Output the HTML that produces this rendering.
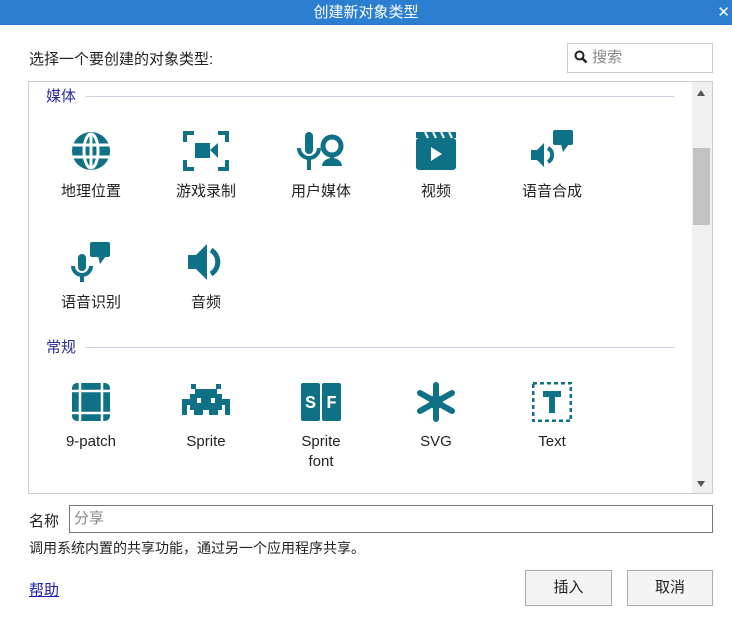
<!DOCTYPE html>
<html><head><meta charset="utf-8"><style>
*{margin:0;padding:0;box-sizing:border-box}
body{width:732px;height:617px;background:#fff;font-family:"Liberation Sans","Noto Sans CJK SC",sans-serif;font-size:15px;color:#222;position:relative;overflow:hidden}
.abs{position:absolute}
.title{left:0;top:0;width:732px;height:25px;background:#2c7fd0;color:#fff;text-align:center;line-height:25px;font-size:15px}
.item{position:absolute;width:100px;text-align:center;font-size:15px;line-height:20px;color:#222}
.item svg{display:block;margin:0 auto 10px}
.sec{position:absolute;left:46px;color:#2a2a9a;font-size:15px;line-height:18px}
.line{position:absolute;height:1px;background:#d0d0e0}
</style></head><body>
<div class="abs title">创建新对象类型<span style="position:absolute;right:2px;top:0">✕</span></div>
<div class="abs" style="left:29px;top:48px">选择一个要创建的对象类型:</div>
<div class="abs" style="left:567px;top:43px;width:146px;height:30px;border:1px solid #ccc;padding-left:6px;line-height:28px;color:#888">
<svg width="14" height="14" viewBox="0 0 14 14" style="vertical-align:-2px"><circle cx="5.5" cy="5.5" r="4" fill="none" stroke="#222" stroke-width="2"/><path d="M8.5 8.5L12.5 12.5" stroke="#222" stroke-width="2.5"/></svg> 搜索</div>
<div class="abs" style="left:28px;top:81px;width:685px;height:413px;border:1px solid #ccc"></div>
<div class="abs" style="left:692px;top:82px;width:20px;height:411px;background:#f0f0f0"></div>
<div class="abs" style="left:693px;top:148px;width:17px;height:77px;background:#c2c2c2"></div>
<div class="abs" style="left:697px;top:90px;width:0;height:0;border-left:4px solid transparent;border-right:4px solid transparent;border-bottom:6px solid #555"></div>
<div class="abs" style="left:697px;top:481px;width:0;height:0;border-left:4px solid transparent;border-right:4px solid transparent;border-top:6px solid #555"></div>
<div class="sec" style="top:88px">媒体</div><div class="line" style="left:86px;top:96px;width:588px"></div>
<div class="sec" style="top:339px">常规</div><div class="line" style="left:86px;top:347px;width:588px"></div>
<div class="item" style="left:41px;top:130px"><svg width="42" height="42" viewBox="0 0 42 42"><circle cx="21" cy="21" r="19" fill="#0e7186"/><g fill="none" stroke="#fff" stroke-width="3"><ellipse cx="21" cy="21" rx="7" ry="17"/><path d="M3 15H39M3 27H39M21 3V39"/></g></svg>地理位置</div>
<div class="item" style="left:156px;top:130px"><svg width="46" height="42" viewBox="0 0 46 42"><g fill="none" stroke="#0e7186" stroke-width="4"><path d="M2 12V3H11M35 3H44V12M44 30V39H35M11 39H2V30"/></g><rect x="12" y="13" width="15" height="15" fill="#0e7186"/><path d="M27 20L35 13V28Z" fill="#0e7186"/></svg>游戏录制</div>
<div class="item" style="left:271px;top:130px"><svg width="50" height="42" viewBox="0 0 50 42"><rect x="9" y="2" width="8" height="22" rx="4" fill="#0e7186"/><path d="M3 18a10 10 0 0 0 20 0M13 28V40" fill="none" stroke="#0e7186" stroke-width="4"/><circle cx="36" cy="16" r="9" fill="none" stroke="#0e7186" stroke-width="5"/><path d="M26 36a10 8 0 0 1 20 0Z" fill="#0e7186"/><rect x="34" y="24" width="4" height="8" fill="#0e7186"/></svg>用户媒体</div>
<div class="item" style="left:386px;top:130px"><svg width="42" height="42" viewBox="0 0 42 42"><rect x="1" y="8" width="40" height="32" rx="3" fill="#0e7186"/><path d="M1 2H41V8H1Z" fill="#0e7186"/><path d="M10 2l3 6M18 2l3 6M26 2l3 6M34 2l3 6" stroke="#fff" stroke-width="2"/><path d="M16 17L27 24L16 31Z" fill="#fff"/></svg>视频</div>
<div class="item" style="left:502px;top:130px"><svg width="46" height="42" viewBox="0 0 46 42"><rect x="24" y="0" width="20" height="15" rx="2" fill="#0e7186"/><path d="M32 14H40L34 22Z" fill="#0e7186"/><path d="M2 20H8L15 13V37L8 30H2Z" fill="#0e7186"/><path d="M19 18a8 8 0 0 1 0 14" fill="none" stroke="#0e7186" stroke-width="4"/></svg>语音合成</div>
<div class="item" style="left:41px;top:241px"><svg width="42" height="42" viewBox="0 0 42 42"><rect x="20" y="1" width="20" height="15" rx="2" fill="#0e7186"/><path d="M28 15H36L30 23Z" fill="#0e7186"/><rect x="8" y="13" width="8" height="17" rx="4" fill="#0e7186"/><path d="M3 25a9 9 0 0 0 18 0M12 34V41" fill="none" stroke="#0e7186" stroke-width="4"/></svg>语音识别</div>
<div class="item" style="left:156px;top:241px"><svg width="42" height="42" viewBox="0 0 42 42"><path d="M3 14H11L22 3V39L11 28H3Z" fill="#0e7186"/><path d="M26 9a14 14 0 0 1 0 24" fill="none" stroke="#0e7186" stroke-width="5"/></svg>音频</div>
<div class="item" style="left:41px;top:382px"><svg width="40" height="40" viewBox="0 0 40 40"><rect x="1" y="1" width="38" height="38" rx="5" fill="#0e7186"/><path d="M9 0V40M31 0V40M0 9H40M0 31H40" stroke="#fff" stroke-width="2.5"/><rect x="11" y="11" width="18" height="18" fill="#0e7186"/></svg>9-patch</div>
<div class="item" style="left:156px;top:382px"><svg width="48" height="40" viewBox="0 -2 48 40"><g fill="#0e7186"><rect x="9" y="0" width="5" height="5"/><rect x="34" y="0" width="5" height="5"/><rect x="13" y="5" width="22" height="6"/><rect x="8" y="10" width="32" height="16"/><rect x="0" y="15" width="48" height="6"/><rect x="0" y="21" width="5" height="10"/><rect x="43" y="21" width="5" height="10"/><rect x="12" y="26" width="9" height="5"/><rect x="27" y="26" width="9" height="5"/></g><rect x="15" y="14" width="4" height="5" fill="#fff"/><rect x="29" y="14" width="4" height="5" fill="#fff"/></svg>Sprite</div>
<div class="item" style="left:271px;top:382px"><svg width="42" height="40" viewBox="0 0 42 40"><rect x="1" y="1" width="19" height="38" rx="2" fill="#0e7186"/><rect x="22" y="1" width="19" height="38" rx="2" fill="#0e7186"/><text x="10.5" y="26" fill="#fff" font-family="Liberation Mono,monospace" font-weight="bold" font-size="18" text-anchor="middle">S</text><text x="31.5" y="26" fill="#fff" font-family="Liberation Mono,monospace" font-weight="bold" font-size="18" text-anchor="middle">F</text></svg>Sprite<br>font</div>
<div class="item" style="left:386px;top:382px"><svg width="42" height="40" viewBox="0 0 42 40"><g stroke="#0e7186" stroke-width="6" stroke-linecap="round"><path d="M21 3V37M5 11L37 29M5 29L37 11"/></g><circle cx="21" cy="20" r="7" fill="#0e7186"/></svg>SVG</div>
<div class="item" style="left:502px;top:382px"><svg width="40" height="40" viewBox="0 0 40 40"><g fill="#0e7186"><path d="M1 1H39V39H1Z" fill="none" stroke="#0e7186" stroke-width="3" stroke-dasharray="4 3"/><path d="M11 9H29V15H23V31H17V15H11Z"/></g></svg>Text</div>
<div class="abs" style="left:29px;top:510px">名称</div>
<div class="abs" style="left:69px;top:505px;width:644px;height:28px;border:1px solid #777;padding-left:4px;line-height:26px;color:#888">分享</div>
<div class="abs" style="left:29px;top:538px;font-size:14px">调用系统内置的共享功能，通过另一个应用程序共享。</div>
<div class="abs" style="left:29px;top:579px;color:#1a1ab0;text-decoration:underline">帮助</div>
<div class="abs" style="left:525px;top:570px;width:87px;height:36px;border:1px solid #aaa;background:#f4f4f4;text-align:center;line-height:34px">插入</div>
<div class="abs" style="left:627px;top:570px;width:86px;height:36px;border:1px solid #aaa;background:#f4f4f4;text-align:center;line-height:34px">取消</div>
</body></html>
